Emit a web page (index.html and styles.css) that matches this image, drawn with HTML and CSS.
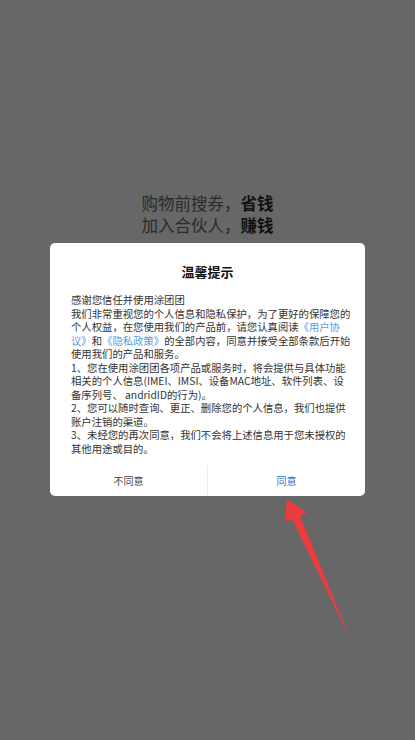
FILE: index.html
```html
<!DOCTYPE html>
<html lang="zh">
<head>
<meta charset="utf-8">
<link rel="stylesheet" href="styles.css">
</head>
<body>
<div class="page">
  <div class="slogan">
    <div class="slogan-line">购物前搜券，<b>省钱</b></div>
    <div class="slogan-line">加入合伙人，<b>赚钱</b></div>
  </div>
  <div class="dialog">
    <div class="dialog-title">温馨提示</div>
    <div class="dialog-body">
      <p>感谢您信任并使用涂团团</p>
      <p>我们非常重视您的个人信息和隐私保护，为了更好的保障您的个人权益，在您使用我们的产品前，请您认真阅读<span class="link">《用户协议》</span>和<span class="link">《隐私政策》</span>的全部内容，同意并接受全部条款后开始使用我们的产品和服务。</p>
      <p>1、您在使用涂团团各项产品或服务时，将会提供与具体功能相关的个人信息(IMEI、IMSI、设备MAC地址、软件列表、设备序列号、 andridID的行为)。</p>
      <p>2、您可以随时查询、更正、删除您的个人信息，我们也提供账户注销的渠道。</p>
      <p>3、未经您的再次同意，我们不会将上述信息用于您未授权的其他用途或目的。</p>
    </div>
    <div class="dialog-actions">
      <div class="btn btn-cancel">不同意</div>
      <div class="btn btn-ok">同意</div>
    </div>
  </div>
  <svg class="arrow" width="415" height="740" viewBox="0 0 415 740">
    <polygon points="287,499 307,513 300,516 350,638 292,519 285,522" fill="#ee3b3b"/>
  </svg>
</div>
</body>
</html>
```

FILE: styles.css
```css
html, body {
  margin: 0;
  padding: 0;
}
body {
  background: #676767;
  font-family: "Noto Sans CJK SC", "Noto Sans", sans-serif;
}
.page {
  position: relative;
  width: 415px;
  height: 740px;
  overflow: hidden;
  padding-top: 192px;
  box-sizing: border-box;
}
.slogan {
  text-align: center;
  color: #2a2a2a;
  font-size: 16.5px;
  line-height: 22px;
}
.slogan b {
  color: #111;
  font-weight: 700;
}
.dialog {
  margin: 7px 0 0 50px;
  width: 315px;
  background: #fff;
  border-radius: 5px;
  overflow: hidden;
}
.dialog-title {
  padding-top: 20px;
  text-align: center;
  font-size: 13px;
  line-height: 18px;
  font-weight: 700;
  color: #111;
}
.dialog-body {
  margin-top: 12px;
  padding: 0 13px 0 21px;
  font-size: 10.35px;
  line-height: 13.5px;
  color: #333;
}
.dialog-body p {
  margin: 0;
}
.link {
  color: #5b9be6;
  line-height: 13.5px;
}
.dialog-actions {
  margin-top: 11px;
  display: flex;
  height: 30px;
}
.btn {
  flex: 1;
  display: flex;
  align-items: center;
  justify-content: center;
  font-size: 10px;
  color: #444;
  padding-bottom: 2px;
}
.btn-cancel {
  border-right: 1px solid #ececec;
}
.btn-ok {
  color: #2f6fd0;
}
.arrow {
  position: absolute;
  left: 0;
  top: 0;
}
```
